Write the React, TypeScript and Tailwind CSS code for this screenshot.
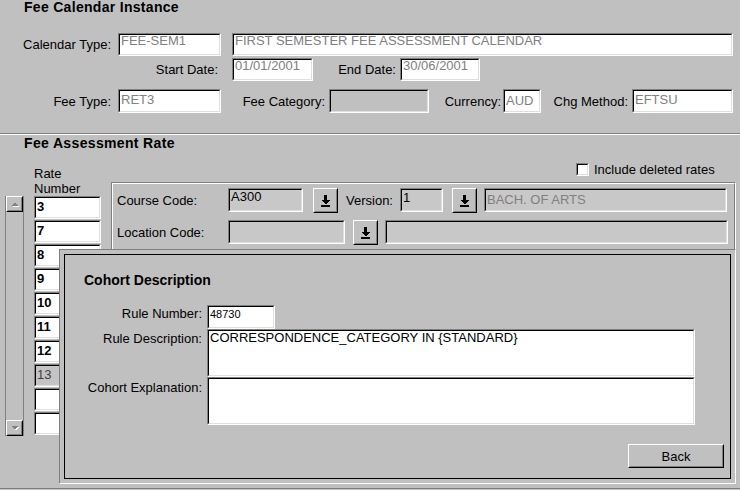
import React from "react";

function Sunken({
  outer,
  inner,
  children,
}: {
  outer: string;
  inner: string;
  children?: React.ReactNode;
}) {
  return (
    <div
      className={
        "box-border shrink-0 border border-t-[#808080] border-l-[#808080] border-b-white border-r-white " +
        outer
      }
    >
      <div
        className={
          "box-border h-full w-full whitespace-nowrap border border-t-black border-l-black border-b-[#dfdfdf] border-r-[#dfdfdf] " +
          inner
        }
      >
        {children}
      </div>
    </div>
  );
}

function Raised({ outer, children }: { outer: string; children?: React.ReactNode }) {
  return (
    <div
      className={
        "box-border shrink-0 border border-t-white border-l-white border-b-black border-r-black " +
        outer
      }
    >
      <div className="box-border flex h-full w-full items-center justify-center border border-t-[#c0c0c0] border-l-[#c0c0c0] border-b-[#808080] border-r-[#808080]">
        {children}
      </div>
    </div>
  );
}

function DownIcon() {
  return (
    <svg width="9" height="12" viewBox="0 0 9 12" shapeRendering="crispEdges" className="mt-[2px]">
      <rect x="3" y="0" width="3" height="5" fill="#000" />
      <polygon points="0,5 9,5 4.5,9.5" fill="#000" />
      <rect x="0" y="10" width="9" height="2" fill="#000" />
    </svg>
  );
}

function ScrollArrow({ down }: { down?: boolean }) {
  return (
    <svg width="9" height="6" viewBox="0 0 9 6" shapeRendering="crispEdges">
      {down ? (
        <>
          <polygon points="2,2 9,2 5.5,5.5" fill="#fff" />
          <polygon points="1,1 8,1 4.5,4.5" fill="#808080" />
        </>
      ) : (
        <>
          <polygon points="1,5 8,5 4.5,1.5" fill="#fff" transform="translate(1,1)" />
          <polygon points="1,5 8,5 4.5,1.5" fill="#808080" />
        </>
      )}
    </svg>
  );
}

const sec1Input = "bg-white text-[#808080] pl-[1px] leading-[9px]";

export default function App() {
  const rates: { v: string; dis?: boolean }[] = [
    { v: "3" },
    { v: "7" },
    { v: "8" },
    { v: "9" },
    { v: "10" },
    { v: "11" },
    { v: "12" },
    { v: "13", dis: true },
    { v: "" },
    { v: "" },
  ];
  return (
    <div className="relative flex h-[490px] w-[740px] flex-col overflow-hidden bg-[#c0c0c0] font-['Liberation_Sans',Arial,sans-serif] text-[13px] leading-[15px] text-black">
      {/* Fee Calendar Instance */}
      <div className="h-[133px] shrink-0">
        <div className="pl-[24px] text-[14px] font-bold tracking-[0.3px]">Fee Calendar Instance</div>
        <div className="mt-[18px] flex h-[23px] items-center">
          <div className="w-[111px] text-right">Calendar Type:</div>
          <Sunken outer="ml-[7px] w-[103px] h-[23px]" inner={sec1Input + " pt-[1px]"}>
            FEE-SEM1
          </Sunken>
          <Sunken outer="ml-[11px] w-[501px] h-[23px]" inner={sec1Input + " pt-[1px]"}>
            FIRST SEMESTER FEE ASSESSMENT CALENDAR
          </Sunken>
        </div>
        <div className="mt-[2px] flex h-[23px] items-center">
          <div className="w-[218px] text-right">Start Date:</div>
          <Sunken outer="ml-[14px] w-[81px] h-[23px]" inner={sec1Input + " pt-[1px]"}>
            01/01/2001
          </Sunken>
          <div className="w-[83px] text-right">End Date:</div>
          <Sunken outer="ml-[4px] w-[80px] h-[23px]" inner={sec1Input + " pt-[1px]"}>
            30/06/2001
          </Sunken>
        </div>
        <div className="mt-[8px] flex h-[24px] items-center">
          <div className="w-[111px] text-right">Fee Type:</div>
          <Sunken outer="ml-[7px] w-[103px] h-[24px]" inner={sec1Input + " pt-[4px]"}>
            RET3
          </Sunken>
          <div className="w-[104px] text-right">Fee Category:</div>
          <Sunken outer="ml-[4px] w-[100px] h-[24px]" inner="bg-[#c0c0c0]" />
          <div className="w-[72px] text-right">Currency:</div>
          <Sunken outer="ml-[2px] w-[38px] h-[24px]" inner={sec1Input + " pt-[5px]"}>
            AUD
          </Sunken>
          <div className="w-[87px] text-right">Chg Method:</div>
          <Sunken outer="ml-[4px] w-[101px] h-[24px]" inner={sec1Input + " pt-[4px]"}>
            EFTSU
          </Sunken>
        </div>
      </div>

      <div className="h-[2px] shrink-0 border-t border-b border-t-[#808080] border-b-white" />

      {/* Fee Assessment Rate */}
      <div className="h-[353px] shrink-0 overflow-hidden pt-[1px]">
        <div className="pl-[24px] text-[14px] font-bold tracking-[0.35px]">Fee Assessment Rate</div>
        <div className="flex items-start">
          {/* scrollbar */}
          <div className="ml-[5px] mt-[45px] flex h-[240px] w-[19px] shrink-0 flex-col justify-between border-x border-x-[#808080]">
            <Raised outer="h-[16px] w-full">
              <ScrollArrow />
            </Raised>
            <Raised outer="h-[16px] w-full">
              <ScrollArrow down />
            </Raised>
          </div>

          {/* rate number column */}
          <div className="ml-[10px] w-[67px] shrink-0">
            <div className="mt-[15px] h-[30px]">
              Rate
              <br />
              Number
            </div>
            <div className="flex flex-col gap-[1px]">
              {rates.map((r, i) => (
                <Sunken
                  key={i}
                  outer="w-[67px] h-[23px]"
                  inner={
                    r.dis
                      ? "bg-[#c4c4c4] text-[#404040] pl-[1px] pt-[4px] leading-[9px]"
                      : "bg-white font-bold pl-[1px] pt-[4px] leading-[9px]"
                  }
                >
                  {r.v}
                </Sunken>
              ))}
            </div>
          </div>

          {/* right column */}
          <div className="ml-[10px] w-[625px] shrink-0">
            <div className="mt-[11px] flex h-[15px] items-center pl-[465px]">
              <Sunken outer="w-[13px] h-[13px]" inner="bg-white" />
              <span className="ml-[5px]">Include deleted rates</span>
            </div>
            <div className="mt-[5px] h-[280px] border border-t-[#808080] border-l-[#808080] border-b-white border-r-white">
              <div className="h-full border border-t-white border-l-white border-b-[#808080] border-r-[#808080]">
                <div className="mt-[4px] flex h-[24px] items-center pl-[4px]">
                  <div className="w-[111px] shrink-0">Course Code:</div>
                  <Sunken outer="w-[75px] h-[24px]" inner="bg-[#c8c8c8] pl-[1px] pt-[2px] leading-[9px]">
                    A300
                  </Sunken>
                  <Raised outer="ml-[10px] w-[25px] h-[25px]">
                    <DownIcon />
                  </Raised>
                  <div className="ml-[8px] w-[54px] shrink-0">Version:</div>
                  <Sunken outer="w-[43px] h-[24px]" inner="bg-[#c8c8c8] pl-[1px] pt-[3px] leading-[9px]">
                    1
                  </Sunken>
                  <Raised outer="ml-[9px] w-[25px] h-[25px]">
                    <DownIcon />
                  </Raised>
                  <Sunken
                    outer="ml-[7px] w-[243px] h-[24px]"
                    inner="bg-[#c8c8c8] text-[#808080] pl-[1px] pt-[5px] leading-[9px]"
                  >
                    BACH. OF ARTS
                  </Sunken>
                </div>
                <div className="mt-[8px] flex h-[24px] items-center pl-[4px]">
                  <div className="w-[111px] shrink-0">Location Code:</div>
                  <Sunken outer="w-[117px] h-[24px]" inner="bg-[#c8c8c8]" />
                  <Raised outer="ml-[8px] w-[25px] h-[25px]">
                    <DownIcon />
                  </Raised>
                  <Sunken outer="ml-[7px] w-[343px] h-[24px]" inner="bg-[#c8c8c8]" />
                </div>
              </div>
            </div>
          </div>
        </div>
      </div>

      <div className="h-[2px] shrink-0 border-t border-b border-t-[#808080] border-b-[#c0c0c0]" />

      {/* Cohort Description dialog overlay */}
      <div className="absolute left-[59px] top-[249px] h-[235px] w-[677px] border border-t-[#808080] border-l-[#808080] border-b-white border-r-white bg-[#c0c0c0] p-[4px]">
        <div className="flex h-full flex-col border border-black">
          <div className="ml-[19px] mt-[18px] text-[14px] font-bold">Cohort Description</div>
          <div className="mt-[17px] flex items-start">
            <div className="w-[137px] shrink-0 pt-[1px] text-right">Rule Number:</div>
            <Sunken outer="ml-[5px] w-[68px] h-[24px]" inner="bg-white pl-[1px] pt-[3px] text-[11px] leading-[9px]">
              48730
            </Sunken>
          </div>
          <div className="flex items-start">
            <div className="w-[137px] shrink-0 pt-[2px] text-right">Rule Description:</div>
            <Sunken outer="ml-[5px] w-[488px] h-[48px]" inner="bg-white pl-[1px] pt-[2px] leading-[9px]">
              CORRESPONDENCE_CATEGORY IN {"{STANDARD}"}
            </Sunken>
          </div>
          <div className="flex items-start">
            <div className="w-[137px] shrink-0 pt-[3px] text-right">Cohort Explanation:</div>
            <Sunken outer="ml-[5px] w-[488px] h-[48px]" inner="bg-white" />
          </div>
          <div className="mt-[19px] flex justify-end pr-[6px]">
            <Raised outer="w-[96px] h-[24px]">
              <span>Back</span>
            </Raised>
          </div>
        </div>
      </div>
    </div>
  );
}
